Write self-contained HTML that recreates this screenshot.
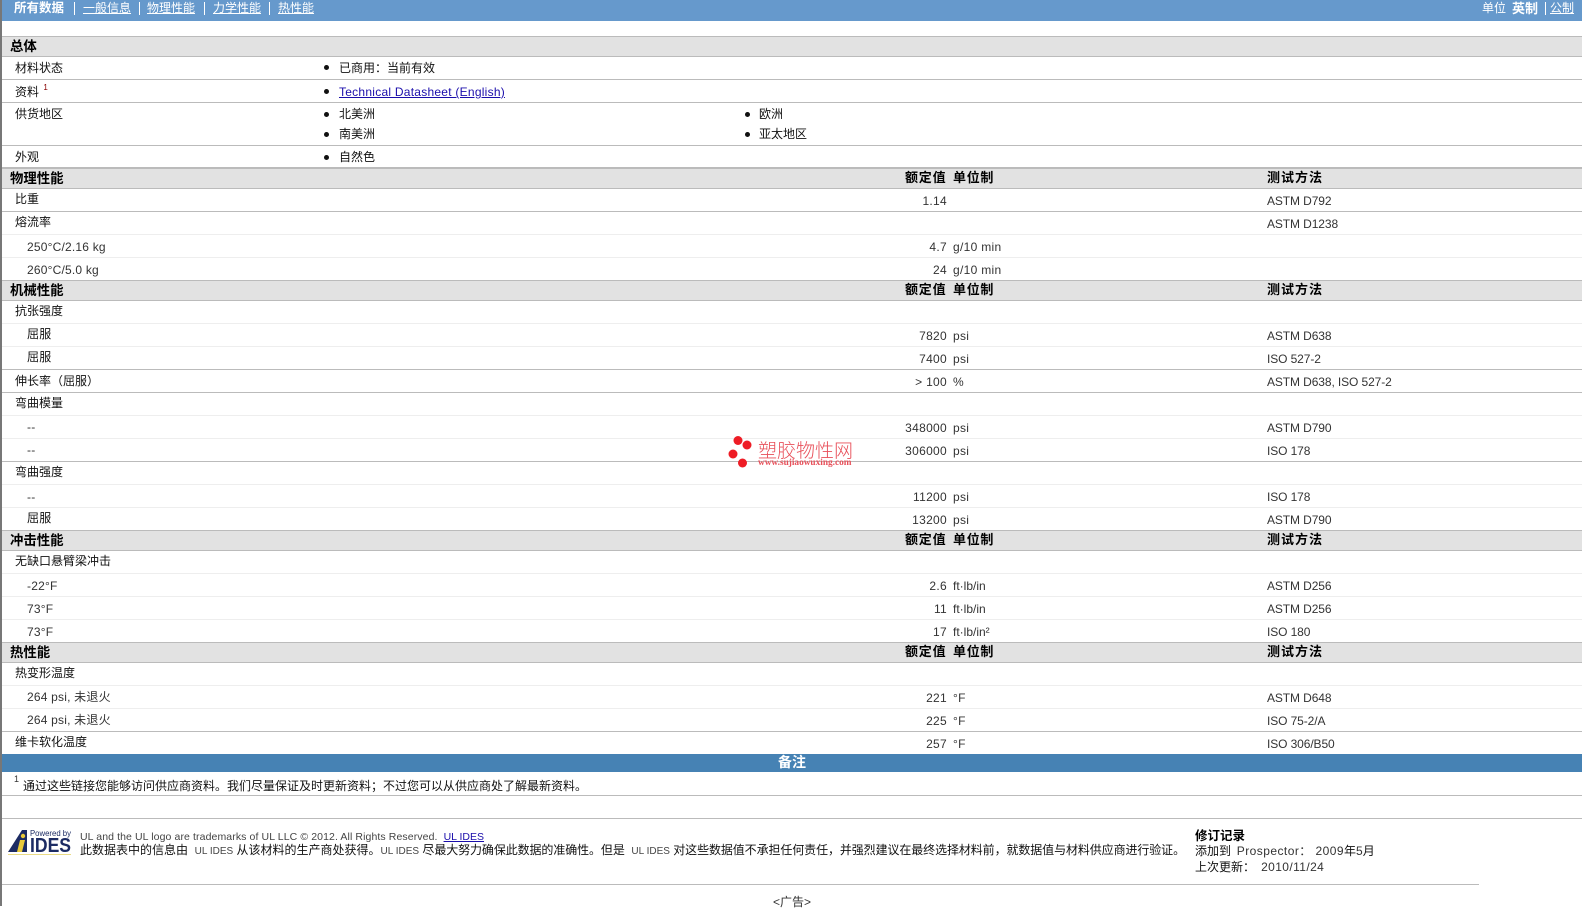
<!DOCTYPE html>
<html lang="zh">
<head>
<meta charset="utf-8">
<title>塑胶物性表</title>
<style>
html,body{margin:0;padding:0;background:#fff}
body{position:relative;width:1582px;height:906px;overflow:hidden;font-family:"Liberation Sans","WenQuanYi Zen Hei","Noto Sans CJK SC",sans-serif;font-size:12px;color:#111}
#b{position:absolute;left:0;top:0;width:2px;height:906px;background:#777;z-index:5}
#nav{position:absolute;left:0;top:0;width:1582px;height:21px;background:#6699cc;color:#fff}
#nav span,#nav a{position:absolute;top:1px;line-height:15px;color:#fff;white-space:nowrap}
#nav a{text-decoration:underline}
#nav i{position:absolute;top:2px;width:1px;height:13px;background:#fff}
.r{position:absolute;left:2px;width:1580px;box-sizing:border-box;border-bottom:1px solid #bbb}
.lt{border-bottom-color:#eee}
.h{background:#e2e2e2;border-top:1px solid #bbb;height:21px;top:0}
.r>*{position:absolute;white-space:nowrap;line-height:16px}
.l{left:13px;top:3px;color:#111}
.k{top:2px}
.s{left:25px;top:4px;color:#333;letter-spacing:.2px}
.p{top:3px}
.q{top:2px;color:#111}
.v{left:745px;width:200px;top:4px;text-align:right;color:#333;letter-spacing:.3px}
.u{left:951px;top:4px;color:#333;letter-spacing:.3px}
.t{left:1265px;top:4px;color:#333;letter-spacing:-.1px}
.h b{font-size:13px;color:#000;top:1px}
.h .a{left:8px;top:2px;font-size:13.4px}
.h .c1{left:903px;letter-spacing:.8px}
.h .c2{left:951px;letter-spacing:.7px}
.h .c3{left:1265px;letter-spacing:1px}
.d{position:absolute;width:5px;height:5px;border-radius:50%;background:#111}
.x{position:absolute;white-space:nowrap;line-height:16px}
a{color:#1a0dab}
</style>
</head>
<body>
<div id="nav">
<span style="left:14px;font-weight:bold;font-size:12.5px">所有数据</span><i style="left:74px"></i>
<a style="left:83px">一般信息</a><i style="left:139px"></i>
<a style="left:147px">物理性能</a><i style="left:204px"></i>
<a style="left:213px">力学性能</a><i style="left:269px"></i>
<a style="left:278px">热性能</a>
<span style="left:1482px">单位</span>
<span style="left:1512px;font-weight:bold;font-size:13px">英制</span><i style="left:1545px"></i>
<a style="left:1550px">公制</a>
</div>
<div id="b"></div>

<div class="r h" style="top:36px"><b class="a">总体</b></div>
<div class="r" style="top:57px;height:23px"><span class="l">材料状态</span><span style="left:337px;top:3px">已商用：当前有效</span></div>
<div class="r" style="top:80px;height:23px"><span class="l" style="top:4px">资料 <sup style="font-size:8px;line-height:0;position:relative;top:-1px;left:1px;color:#800">1</sup></span><a href="#" style="left:337px;top:4px;letter-spacing:.25px">Technical Datasheet (English)</a></div>
<div class="r" style="top:103px;height:43px"><span class="l">供货地区</span><span style="left:337px;top:3px">北美洲</span><span style="left:337px;top:23px">南美洲</span><span style="left:757px;top:3px">欧洲</span><span style="left:757px;top:23px">亚太地区</span></div>
<div class="r" style="top:146px;height:22px"><span class="l">外观</span><span style="left:337px;top:3px">自然色</span></div>
<i class="d" style="left:324px;top:65px"></i><i class="d" style="left:324px;top:89px"></i><i class="d" style="left:324px;top:112px"></i><i class="d" style="left:324px;top:132px"></i><i class="d" style="left:324px;top:155px"></i><i class="d" style="left:745px;top:112px"></i><i class="d" style="left:745px;top:132px"></i>

<div class="r h" style="top:168px"><b class="a">物理性能</b><b class="c1">额定值</b><b class="c2">单位制</b><b class="c3">测试方法</b></div>
<div class="r" style="top:189px;height:23px"><span class="l k">比重</span><span class="v">1.14</span><span class="t">ASTM D792</span></div>
<div class="r lt" style="top:212px;height:23px"><span class="l k">熔流率</span><span class="t">ASTM D1238</span></div>
<div class="r lt" style="top:235px;height:23px"><span class="s">250°C/2.16 kg</span><span class="v">4.7</span><span class="u">g/10 min</span></div>
<div class="r" style="top:258px;height:22px;border-bottom:0"><span class="s">260°C/5.0 kg</span><span class="v">24</span><span class="u">g/10 min</span></div>

<div class="r h" style="top:280px"><b class="a">机械性能</b><b class="c1">额定值</b><b class="c2">单位制</b><b class="c3">测试方法</b></div>
<div class="r lt" style="top:301px;height:23px"><span class="l k">抗张强度</span></div>
<div class="r lt" style="top:324px;height:23px"><span class="s q">屈服</span><span class="v">7820</span><span class="u">psi</span><span class="t">ASTM D638</span></div>
<div class="r" style="top:347px;height:23px"><span class="s q">屈服</span><span class="v">7400</span><span class="u">psi</span><span class="t">ISO 527-2</span></div>
<div class="r" style="top:370px;height:23px"><span class="l">伸长率（屈服）</span><span class="v">&gt; 100</span><span class="u">%</span><span class="t">ASTM D638, ISO 527-2</span></div>
<div class="r lt" style="top:393px;height:23px"><span class="l k">弯曲模量</span></div>
<div class="r lt" style="top:416px;height:23px"><span class="s p">--</span><span class="v">348000</span><span class="u">psi</span><span class="t">ASTM D790</span></div>
<div class="r" style="top:439px;height:23px"><span class="s p">--</span><span class="v">306000</span><span class="u">psi</span><span class="t">ISO 178</span></div>
<div class="r lt" style="top:462px;height:23px"><span class="l k">弯曲强度</span></div>
<div class="r lt" style="top:485px;height:23px"><span class="s">--</span><span class="v">11200</span><span class="u">psi</span><span class="t">ISO 178</span></div>
<div class="r" style="top:508px;height:22px;border-bottom:0"><span class="s q">屈服</span><span class="v">13200</span><span class="u">psi</span><span class="t">ASTM D790</span></div>

<div class="r h" style="top:530px"><b class="a">冲击性能</b><b class="c1">额定值</b><b class="c2">单位制</b><b class="c3">测试方法</b></div>
<div class="r lt" style="top:551px;height:23px"><span class="l k">无缺口悬臂梁冲击</span></div>
<div class="r lt" style="top:574px;height:23px"><span class="s">-22°F</span><span class="v">2.6</span><span class="u" style="letter-spacing:0">ft·lb/in</span><span class="t">ASTM D256</span></div>
<div class="r lt" style="top:597px;height:23px"><span class="s">73°F</span><span class="v">11</span><span class="u" style="letter-spacing:0">ft·lb/in</span><span class="t">ASTM D256</span></div>
<div class="r" style="top:620px;height:22px;border-bottom:0"><span class="s">73°F</span><span class="v">17</span><span class="u" style="letter-spacing:0">ft·lb/in²</span><span class="t">ISO 180</span></div>

<div class="r h" style="top:642px"><b class="a">热性能</b><b class="c1">额定值</b><b class="c2">单位制</b><b class="c3">测试方法</b></div>
<div class="r lt" style="top:663px;height:23px"><span class="l k">热变形温度</span></div>
<div class="r lt" style="top:686px;height:23px"><span class="s p">264 psi, 未退火</span><span class="v">221</span><span class="u">°F</span><span class="t">ASTM D648</span></div>
<div class="r" style="top:709px;height:23px"><span class="s p">264 psi, 未退火</span><span class="v">225</span><span class="u">°F</span><span class="t">ISO 75-2/A</span></div>
<div class="r" style="top:732px;height:22px;border-bottom:0"><span class="l k">维卡软化温度</span><span class="v">257</span><span class="u">°F</span><span class="t">ISO 306/B50</span></div>

<div class="x" style="left:2px;top:754px;width:1580px;height:18px;background:#4682b4;color:#fff;font-weight:bold;font-size:14px;text-align:center;line-height:17px">备注</div>
<div class="r" style="top:772px;height:24px"><span style="left:12px;top:-1px;font-size:9px;color:#333">1</span><span style="left:21px;top:6px">通过这些链接您能够访问供应商资料。我们尽量保证及时更新资料；不过您可以从供应商处了解最新资料。</span></div>
<div class="r" style="top:796px;height:23px"></div>

<svg style="position:absolute;left:7px;top:828px" width="66" height="28" viewBox="0 0 66 28">
<polygon points="1,24 15,2 20,2 20,24" fill="#1c2b63"/>
<polygon points="10,24 13,12 18,12 15,24" fill="#e8c93a"/>
<circle cx="16" cy="8" r="2.200" fill="#e8c93a"/>
<rect x="1" y="26" width="63" height="1" fill="#eadb85"/>
<text x="23" y="8" font-family="Liberation Sans" font-size="8.500" fill="#1c2b63" textLength="41" lengthAdjust="spacingAndGlyphs">Powered by</text>
<text x="23" y="24" font-family="Liberation Sans" font-size="20" font-weight="bold" fill="#1c2b63" textLength="41" lengthAdjust="spacingAndGlyphs">IDES</text>
</svg>
<div class="x" style="left:80px;top:829px;color:#444;font-size:10.5px;letter-spacing:.1px">UL and the UL logo are trademarks of UL LLC © 2012. All Rights Reserved. <a href="#" style="margin-left:3px;letter-spacing:0">UL IDES</a></div>
<div class="x" style="left:80px;top:842px">此数据表中的信息由 &nbsp;<span style="font-size:10px;color:#444">UL IDES</span> 从该材料的生产商处获得。<span style="font-size:10px;color:#444">UL IDES</span> <span style="letter-spacing:-.1px">尽最大努力确保此数据的准确性。但是</span> &nbsp;<span style="font-size:10px;color:#444">UL IDES</span> <span style="letter-spacing:-.1px">对这些数据值不承担任何责任，并强烈建议在最终选择材料前，就数据值与材料供应商进行验证。</span></div>
<div class="x" style="left:1195px;top:828px;font-weight:bold;font-size:12.5px;color:#000">修订记录</div>
<div class="x" style="left:1195px;top:843px">添加到 &thinsp;<span style="color:#333;letter-spacing:.45px">Prospector：&nbsp;2009</span>年<span style="color:#333">5</span>月</div>
<div class="x" style="left:1195px;top:859px">上次更新： <span style="color:#333;letter-spacing:.4px;margin-left:-1px">&nbsp;2010/11/24</span></div>
<div style="position:absolute;left:2px;top:884px;width:1477px;height:1px;background:#bbb"></div>
<div class="x" style="left:2px;width:1580px;top:894px;text-align:center;color:#333">&lt;广告&gt;</div>

<svg style="position:absolute;left:725px;top:432px" width="30" height="40"><g fill="#ee1c25"><circle cx="13" cy="8.500" r="4.500"/><circle cx="22" cy="13" r="4.500"/><circle cx="8" cy="22" r="4.500"/><circle cx="17.500" cy="31" r="4.500"/></g></svg>
<div class="x" style="left:758px;top:440px;font-size:19px;line-height:20px;color:#e8505a;font-family:'Noto Sans CJK SC',sans-serif;font-weight:300">塑胶物性网</div>
<div class="x" style="left:758px;top:458px;font-size:9.300px;line-height:11px;color:#e8505a;font-weight:bold;font-family:'Liberation Serif',serif">www.sujiaowuxing.com</div>
</body>
</html>
